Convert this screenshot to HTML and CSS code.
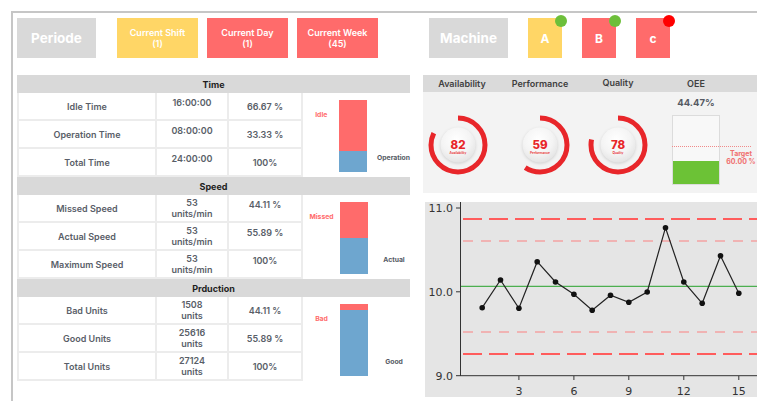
FILE: index.html
```html
<!DOCTYPE html>
<html lang="en">
<head>
<meta charset="utf-8">
<title>Production Dashboard</title>
<link rel="stylesheet" href="styles.css">
</head>
<body>
<div class="frame">
  <header class="topbar">
    <div class="chip chip-grey chip-title">Periode</div>
    <nav class="periods">
      <div class="chip chip-yellow chip-period">Current Shift<br>(1)</div>
      <div class="chip chip-red chip-period">Current Day<br>(1)</div>
      <div class="chip chip-red chip-period">Current Week<br>(45)</div>
    </nav>
    <div class="chip chip-grey chip-title machine-title">Machine</div>
    <nav class="machines">
      <div class="chip chip-yellow chip-machine">A<span class="status ok"></span></div>
      <div class="chip chip-red chip-machine">B<span class="status ok"></span></div>
      <div class="chip chip-red chip-machine">c<span class="status down"></span></div>
    </nav>
  </header>

  <main class="content">
    <section class="stats">
      <div class="block">
        <div class="block-head">Time</div>
        <div class="cell name">Idle Time</div>
        <div class="cell top">16:00:00</div>
        <div class="cell">66.67 %</div>
        <div class="cell name">Operation Time</div>
        <div class="cell top">08:00:00</div>
        <div class="cell">33.33 %</div>
        <div class="cell name">Total Time</div>
        <div class="cell top">24:00:00</div>
        <div class="cell">100%</div>
        <div class="chart">
          <div class="bar-side"><span class="bar-label neg">Idle</span></div>
          <div class="bar"><div class="bar-fill" style="height:51px"></div></div>
          <div class="bar-base"><span class="bar-label">Operation</span></div>
        </div>
      </div>

      <div class="block">
        <div class="block-head">Speed</div>
        <div class="cell name">Missed Speed</div>
        <div class="cell">53<br>units/min</div>
        <div class="cell top">44.11 %</div>
        <div class="cell name">Actual Speed</div>
        <div class="cell">53<br>units/min</div>
        <div class="cell top">55.89 %</div>
        <div class="cell name">Maximum Speed</div>
        <div class="cell">53<br>units/min</div>
        <div class="cell top">100%</div>
        <div class="chart">
          <div class="bar-side"><span class="bar-label neg">Missed</span></div>
          <div class="bar"><div class="bar-fill" style="height:36px"></div></div>
          <div class="bar-base"><span class="bar-label">Actual</span></div>
        </div>
      </div>

      <div class="block">
        <div class="block-head">Prduction</div>
        <div class="cell name">Bad Units</div>
        <div class="cell">1508<br>units</div>
        <div class="cell">44.11 %</div>
        <div class="cell name">Good Units</div>
        <div class="cell">25616<br>units</div>
        <div class="cell">55.89 %</div>
        <div class="cell name">Total Units</div>
        <div class="cell">27124<br>units</div>
        <div class="cell">100%</div>
        <div class="chart">
          <div class="bar-side"><span class="bar-label neg">Bad</span></div>
          <div class="bar"><div class="bar-fill" style="height:6px"></div></div>
          <div class="bar-base"><span class="bar-label">Good</span></div>
        </div>
      </div>
    </section>

    <section class="oee">
      <div class="kpi-head">
        <span>Availability</span>
        <span>Performance</span>
        <span class="raised">Quality</span>
        <span>OEE</span>
      </div>
      <div class="kpi-body">
        <svg class="defs" width="0" height="0" aria-hidden="true">
          <defs>
            <radialGradient id="knob" cx="45%" cy="35%" r="75%">
              <stop offset="0" stop-color="#ffffff"/>
              <stop offset="0.55" stop-color="#f4f4f4"/>
              <stop offset="1" stop-color="#dedede"/>
            </radialGradient>
          </defs>
        </svg>
        <div class="gauge first">
          <svg viewBox="0 0 60 60" width="60" height="60">
            <circle class="ring" cx="30" cy="30" r="27" stroke-dasharray="139.1 200" transform="rotate(-90 30 30)"/>
            <circle class="knob" cx="30" cy="30" r="17.5"/>
            <text class="gauge-num" x="30" y="33.5">82</text>
            <text class="gauge-cap" x="30" y="38.6">Availability</text>
          </svg>
        </div>
        <div class="gauge">
          <svg viewBox="0 0 60 60" width="60" height="60">
            <circle class="ring" cx="30" cy="30" r="27" stroke-dasharray="100.1 200" transform="rotate(-90 30 30)"/>
            <circle class="knob" cx="30" cy="30" r="17.5"/>
            <text class="gauge-num" x="30" y="33.5">59</text>
            <text class="gauge-cap" x="30" y="38.6">Performance</text>
          </svg>
        </div>
        <div class="gauge">
          <svg viewBox="0 0 60 60" width="60" height="60">
            <circle class="ring" cx="30" cy="30" r="27" stroke-dasharray="132.3 200" transform="rotate(-90 30 30)"/>
            <circle class="knob" cx="30" cy="30" r="17.5"/>
            <text class="gauge-num" x="30" y="33.5">78</text>
            <text class="gauge-cap" x="30" y="38.6">Quality</text>
          </svg>
        </div>
        <div class="oee-col">
          <div class="oee-value">44.47%</div>
          <div class="oee-box">
            <div class="oee-fill"></div>
            <div class="target"><span class="target-label">Target<br>60.00 %</span></div>
          </div>
        </div>
      </div>

      <div class="spc">
        <svg viewBox="0 0 332 195" width="332" height="195">
          <!-- control limits and centre line -->
          <line class="ucl" x1="38" y1="17" x2="332" y2="17"/>
          <line class="warn" x1="38" y1="39" x2="332" y2="39"/>
          <line class="mean" x1="35" y1="84.3" x2="332" y2="84.3"/>
          <line class="warn" x1="38" y1="130" x2="332" y2="130"/>
          <line class="ucl" x1="38" y1="152" x2="332" y2="152"/>

          <!-- axes -->
          <line class="axis" x1="35.5" y1="0" x2="35.5" y2="174"/>
          <line class="axis" x1="35" y1="173.7" x2="332" y2="173.7"/>
          <line class="axis" x1="31" y1="6" x2="35" y2="6"/>
          <line class="axis" x1="31" y1="89.8" x2="35" y2="89.8"/>
          <line class="axis" x1="31" y1="173.7" x2="35" y2="173.7"/>
          <line class="axis" x1="93.9" y1="174" x2="93.9" y2="178"/>
          <line class="axis" x1="148.9" y1="174" x2="148.9" y2="178"/>
          <line class="axis" x1="203.8" y1="174" x2="203.8" y2="178"/>
          <line class="axis" x1="258.8" y1="174" x2="258.8" y2="178"/>
          <line class="axis" x1="313.8" y1="174" x2="313.8" y2="178"/>

          <text class="tick-y" x="28" y="10">11.0</text>
          <text class="tick-y" x="28" y="93.8">10.0</text>
          <text class="tick-y" x="28" y="177.7">9.0</text>
          <text class="tick-x" x="93.9" y="193">3</text>
          <text class="tick-x" x="148.9" y="193">6</text>
          <text class="tick-x" x="203.8" y="193">9</text>
          <text class="tick-x" x="258.8" y="193">12</text>
          <text class="tick-x" x="313.8" y="193">15</text>

          <!-- measurements -->
          <polyline class="series" points="57.2,105.7 75.5,78 93.9,106.3 112.2,59.7 130.5,80 148.9,92.3 167.2,108.3 185.5,93.3 203.8,100.3 222.2,90 240.5,25.7 258.8,80 277.2,101.3 295.5,53.7 313.8,91.3"/>
          <g class="dots">
            <circle cx="57.2" cy="105.7" r="2.8"/>
            <circle cx="75.5" cy="78" r="2.8"/>
            <circle cx="93.9" cy="106.3" r="2.8"/>
            <circle cx="112.2" cy="59.7" r="2.8"/>
            <circle cx="130.5" cy="80" r="2.8"/>
            <circle cx="148.9" cy="92.3" r="2.8"/>
            <circle cx="167.2" cy="108.3" r="2.8"/>
            <circle cx="185.5" cy="93.3" r="2.8"/>
            <circle cx="203.8" cy="100.3" r="2.8"/>
            <circle cx="222.2" cy="90" r="2.8"/>
            <circle cx="240.5" cy="25.7" r="2.8"/>
            <circle cx="258.8" cy="80" r="2.8"/>
            <circle cx="277.2" cy="101.3" r="2.8"/>
            <circle cx="295.5" cy="53.7" r="2.8"/>
            <circle cx="313.8" cy="91.3" r="2.8"/>
          </g>
        </svg>
      </div>
    </section>
  </main>
</div>
</body>
</html>
```

FILE: styles.css
```css
* { box-sizing: border-box; }

html, body {
  margin: 0;
  height: 100%;
}

body {
  background: #ffffff;
  font-family: Inter, "Noto Sans", sans-serif;
  overflow: hidden;
}

/* outer frame: only top and left rules are visible */
.frame {
  margin: 11px 0 0 11px;
  height: 390px;
  border-top: 2px solid #c6c6c6;
  border-left: 2px solid #c6c6c6;
  padding: 5px 0 0 4px;
}

/* ---------- top selector bar ---------- */
.topbar {
  display: flex;
  align-items: flex-start;
  height: 40px;
}

.chip {
  position: relative;
  display: flex;
  align-items: center;
  justify-content: center;
  text-align: center;
  height: 40px;
  color: #ffffff;
  font-weight: 700;
}

.chip-grey { background: #d9d9d9; }
.chip-yellow { background: #ffd666; }
.chip-red { background: #ff6b6b; }

.chip-title {
  width: 79px;
  font-size: 13.5px;
}

.periods {
  display: flex;
  gap: 9px;
  margin-left: 21px;
}

.chip-period {
  width: 81px;
  font-size: 9px;
  line-height: 11px;
  font-weight: 600;
}

.machine-title { margin-left: 51px; }

.machines {
  display: flex;
  gap: 20px;
  margin-left: 20px;
}

.chip-machine {
  width: 34px;
  font-size: 12px;
}

.status {
  position: absolute;
  top: -3px;
  right: -5px;
  width: 12px;
  height: 12px;
  border-radius: 50%;
}
.status.ok { background: #6dbf3a; }
.status.down { background: #ff0000; }

/* ---------- main area ---------- */
.content {
  display: flex;
  gap: 13px;
  margin-top: 17px;
}

.stats {
  width: 393px;
  flex: none;
}

.block {
  display: grid;
  grid-template-columns: 140px 72px 74px 107px;
  grid-template-rows: 18px repeat(3, 28px);
}

.block-head {
  grid-column: 1 / -1;
  grid-row: 1;
  display: flex;
  align-items: center;
  justify-content: center;
  background: #d9d9d9;
  color: #1e1e1e;
  font-size: 9px;
  font-weight: 700;
}

.cell {
  display: flex;
  flex-direction: column;
  align-items: center;
  justify-content: center;
  background: #ffffff;
  border-right: 2px solid #ececec;
  border-bottom: 2px solid #ececec;
  color: #595e68;
  font-size: 9px;
  font-weight: 600;
  line-height: 11px;
  text-align: center;
}

.cell.name { border-left: 2px solid #ececec; }

.cell.top {
  justify-content: flex-start;
  padding-top: 4px;
}

/* stacked bar beside each block */
.chart {
  grid-column: 4;
  grid-row: 2 / 5;
  display: flex;
  padding-top: 7px;
  background: #ffffff;
}

.bar-side {
  width: 37px;
  padding-top: 11px;
  text-align: center;
}

.bar-label {
  display: block;
  font-size: 6.8px;
  font-weight: 700;
  line-height: 8px;
  color: #555a63;
}
.bar-label.neg { color: #ff6b6b; }

.bar {
  width: 28px;
  height: 72px;
  background: #6ea6cf;
}

.bar-fill { background: #ff6b6b; }

.bar-base {
  flex: 1;
  display: flex;
  align-items: flex-end;
  justify-content: center;
  padding: 0 0 15px 10px;
}

/* ---------- KPI panel ---------- */
.oee {
  flex: 1;
  min-width: 0;
}

.kpi-head,
.kpi-body {
  display: grid;
  grid-template-columns: repeat(4, 78px);
}

.kpi-head {
  height: 17px;
  align-items: center;
  background: #dadada;
  color: #3f3f3f;
  font-size: 9px;
  font-weight: 600;
  text-align: center;
}

.kpi-head .raised { margin-top: -2px; }

.kpi-body {
  position: relative;
  height: 101px;
  background: #f3f3f3;
}

.defs {
  position: absolute;
}

.gauge {
  display: flex;
  justify-content: center;
  padding-top: 23px;
}

.gauge.first { padding-right: 8px; }

.ring {
  fill: none;
  stroke: #e8262a;
  stroke-width: 5;
}

.knob {
  fill: url(#knob);
  filter: drop-shadow(0 1px 1.5px rgba(0, 0, 0, 0.14));
}

.gauge-num {
  fill: #e8262a;
  font-size: 11.5px;
  font-weight: 800;
  text-anchor: middle;
}

.gauge-cap {
  fill: #e8262a;
  font-size: 3.2px;
  font-weight: 600;
  text-anchor: middle;
}

.oee-col {
  display: flex;
  flex-direction: column;
  align-items: center;
  padding-top: 5px;
}

.oee-value {
  color: #555a63;
  font-size: 9.5px;
  font-weight: 700;
  line-height: 11px;
}

.oee-box {
  position: relative;
  margin-top: 7px;
  width: 48px;
  height: 70px;
  display: flex;
  flex-direction: column;
  justify-content: flex-end;
  border: 1px solid #dcdcdc;
  background: #f8f8f8;
}

.oee-fill {
  height: 23px;
  background: #6cc236;
}

.target {
  position: absolute;
  top: 30px;
  left: -1px;
  width: 79px;
  border-top: 1px dotted #f08a8a;
}

.target-label {
  position: absolute;
  top: 3px;
  left: 54px;
  width: 30px;
  color: #f07070;
  font-size: 7px;
  font-weight: 700;
  line-height: 8px;
  text-align: center;
  white-space: nowrap;
}

/* ---------- control chart ---------- */
.spc {
  margin: 9px 0 0 2px;
  height: 195px;
  background: #e5e5e5;
}

.spc svg { display: block; }

.axis {
  stroke: #333333;
  stroke-width: 1;
}

.ucl {
  stroke: #ff5c5c;
  stroke-width: 2;
  stroke-dasharray: 19 7;
}

.warn {
  stroke: #f4a3a3;
  stroke-width: 1.5;
  stroke-dasharray: 10 8;
}

.mean {
  stroke: #4caf50;
  stroke-width: 1.3;
}

.series {
  fill: none;
  stroke: #222222;
  stroke-width: 1.2;
}

.dots circle { fill: #111111; }

.tick-y,
.tick-x {
  fill: #333333;
  font-family: "DejaVu Sans", sans-serif;
  font-size: 11px;
}

.tick-y { text-anchor: end; }
.tick-x { text-anchor: middle; }
```
